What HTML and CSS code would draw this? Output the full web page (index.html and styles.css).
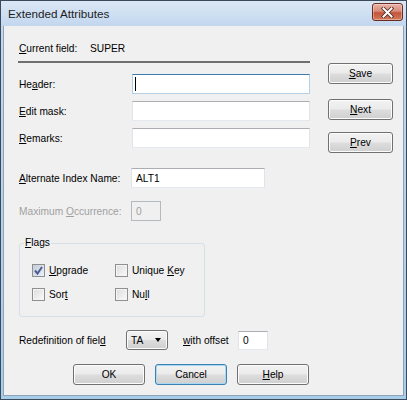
FILE: index.html
```html
<!DOCTYPE html>
<html lang="en">
<head>
    <meta charset="UTF-8">
    <title>Extended Attributes</title>
    <link rel="stylesheet" href="styles.css">
</head>
<body>

    <div class="window">
        <div class="titlebar">
            <span class="title">Extended Attributes</span>
            <span class="close">
                <svg width="13" height="11" viewBox="0 0 13 11">
                    <path d="M2.5 1.5 L10.5 9.5 M10.5 1.5 L2.5 9.5" stroke="#4a2a24" stroke-width="3.6" stroke-linecap="square"/>
                    <path d="M2.5 1.5 L10.5 9.5 M10.5 1.5 L2.5 9.5" stroke="#ffffff" stroke-width="2" stroke-linecap="square"/>
                </svg>
            </span>
        </div>

        <div class="client">
            <div class="top">
                <div class="fields">
                    <div class="current">
                        <span class="cur-label"><u>C</u>urrent field:</span>
                        <span>SUPER</span>
                    </div>
                    <div class="sep"></div>

                    <div class="row first">
                        <span class="lbl">He<u>a</u>der:</span>
                        <span class="field">
                            <input type="text" class="txt wide focus">
                            <span class="caret"></span>
                        </span>
                    </div>
                    <div class="row">
                        <span class="lbl"><u>E</u>dit mask:</span>
                        <input type="text" class="txt wide">
                    </div>
                    <div class="row">
                        <span class="lbl"><u>R</u>emarks:</span>
                        <input type="text" class="txt wide">
                    </div>
                </div>

                <div class="side">
                    <button class="btn save"><u>S</u>ave</button>
                    <button class="btn next"><u>N</u>ext</button>
                    <button class="btn prev"><u>P</u>rev</button>
                </div>
            </div>

            <div class="row alt">
                <span class="lbl"><u>A</u>lternate Index Name:</span>
                <input type="text" class="txt mid" value="ALT1">
            </div>
            <div class="row max">
                <span class="lbl disabled">Maximum <u>O</u>ccurrence:</span>
                <input type="text" class="txt small" value="0" disabled>
            </div>

            <fieldset class="flags">
                <legend><u>F</u>lags</legend>
                <div class="checks">
                    <label class="check">
                        <span class="box on">
                            <svg width="11" height="11" viewBox="0 0 11 11">
                                <path d="M2 5.5 L4.5 8.5 L9 2" fill="none" stroke="#4b5f96" stroke-width="2"/>
                            </svg>
                        </span>
                        <span><u>U</u>pgrade</span>
                    </label>
                    <label class="check">
                        <span class="box"></span>
                        <span>Unique <u>K</u>ey</span>
                    </label>
                    <label class="check">
                        <span class="box"></span>
                        <span>Sor<u>t</u></span>
                    </label>
                    <label class="check">
                        <span class="box"></span>
                        <span>Nu<u>l</u>l</span>
                    </label>
                </div>
            </fieldset>

            <div class="row redef">
                <span class="redef-lbl">Redefinition of fiel<u>d</u></span>
                <div class="combo">
                    <span>TA</span>
                    <span class="arrow"></span>
                </div>
                <span class="offset-lbl"><u>w</u>ith offset</span>
                <input type="text" class="txt tiny" value="0">
            </div>

            <div class="actions">
                <button class="btn wide-btn">OK</button>
                <button class="btn wide-btn default">Cancel</button>
                <button class="btn wide-btn"><u>H</u>elp</button>
            </div>
        </div>
    </div>

</body>
</html>
```

FILE: styles.css
```css
* {
    box-sizing: border-box;
}

body {
    margin: 0;
    font-family: "Liberation Sans", Arial, sans-serif;
    font-size: 10.2px;
    color: #000;
}

/* Window frame */
.window {
    width: 407px;
    height: 400px;
    border: 1px solid #3b4a5b;
    padding: 0 2px 3px 2px;
    background: linear-gradient(180deg, #dce8f5 0%, #c3d7ed 30px, #a8cde9 100%);
    display: flex;
    flex-direction: column;
}

.titlebar {
    height: 25px;
    margin: 0 -2px;
    padding: 0 3px 0 7px;
    display: flex;
    align-items: center;
    justify-content: space-between;
    background: linear-gradient(180deg, #dbe7f5 0%, #cfe0f2 50%, #c2d6ee 100%);
}

.title {
    font-size: 11.7px;
    color: #1e1e1e;
}

.close {
    width: 31px;
    height: 18px;
    margin-top: -3px;
    border: 1px solid #6b2b22;
    border-radius: 3px;
    background: linear-gradient(180deg, #e9b4a8 0%, #d98a78 45%, #c5533c 55%, #d27c5c 100%);
    box-shadow: inset 0 0 0 1px rgba(255, 255, 255, 0.35);
    display: flex;
    align-items: center;
    justify-content: center;
}

.client {
    flex: 1;
    background: #f0f0f0;
    border: 1px solid #8ea3b9;
    border-top: none;
    padding: 15px 0 0 15px;
}

/* Top part: fields and side buttons */
.top {
    display: flex;
    align-items: flex-start;
}

.fields {
    width: 291px;
}

.current {
    display: flex;
    height: 14px;
    align-items: center;
}

.cur-label {
    width: 71px;
}

.sep {
    margin: 6px 0 0 -1px;
    width: 292px;
    border-top: 2px solid #6f6f6f;
}

.row {
    display: flex;
    align-items: center;
    height: 20px;
    margin-top: 7px;
}

.row.first {
    margin-top: 11px;
}

.lbl {
    width: 113px;
}

.disabled {
    color: #a0a0a0;
}

.field {
    position: relative;
    display: flex;
}

.caret {
    position: absolute;
    left: 3px;
    top: 3px;
    width: 1px;
    height: 14px;
    background: #000;
}

/* Text boxes */
.txt {
    height: 20px;
    margin: 0;
    padding: 0 0 0 4px;
    font-family: inherit;
    font-size: inherit;
    color: #000;
    background: #fff;
    border: 1px solid #e2e3ea;
    border-top-color: #abadb3;
    border-bottom-color: #e3e9ef;
    border-radius: 0;
    outline: none;
}

.txt.focus {
    border-color: #b5cfe7;
    border-top-color: #3d7bad;
}

.txt:disabled {
    background: #f0f0f0;
    border-color: #b4b9bd;
    color: #a0a0a0;
}

.wide {
    width: 178px;
}

.mid {
    width: 134px;
}

.small {
    width: 30px;
}

.tiny {
    width: 30px;
    height: 19px;
}

.side {
    margin-left: 18px;
    width: 65px;
    padding-top: 22px;
    display: flex;
    flex-direction: column;
}

/* Buttons */
.btn {
    height: 21px;
    padding: 0;
    font-family: inherit;
    font-size: inherit;
    color: #000;
    border: 1px solid #707070;
    border-radius: 3px;
    background: linear-gradient(180deg, #f2f2f2 0%, #ebebeb 48%, #dddddd 52%, #cfcfcf 100%);
    box-shadow: inset 0 0 0 1px #fcfcfc;
}

.side .btn {
    width: 65px;
}

.next {
    margin-top: 15px;
}

.prev {
    margin-top: 12px;
}

.alt {
    margin-top: 15px;
}

.alt .lbl,
.max .lbl {
    width: 112px;
}

.max {
    margin-top: 13px;
}

/* Flags group */
.flags {
    width: 186px;
    margin: 15px 0 0 0;
    padding: 0 0 13px 4px;
    border: 1px solid #d5dfe5;
    border-radius: 3px;
    min-width: 0;
}

.flags legend {
    padding: 0 1px;
    line-height: 14px;
}

.checks {
    margin: 12px 0 0 8px;
    display: grid;
    grid-template-columns: 83px 83px;
    row-gap: 7px;
}

.check {
    display: flex;
    align-items: center;
    gap: 4px;
    height: 17px;
}

.box {
    width: 13px;
    height: 13px;
    border: 1px solid #8e8f8f;
    background: linear-gradient(135deg, #dcdcdc 0%, #f4f4f4 80%, #ffffff 100%);
    box-shadow: inset 0 0 0 1px #f4f4f4;
    display: flex;
    align-items: center;
    justify-content: center;
}

.box.on {
    background: linear-gradient(135deg, #c5cbd9 0%, #e4e8f1 80%, #f3f5f9 100%);
    box-shadow: none;
}

/* Redefinition row */
.redef {
    margin-top: 13px;
}

.redef-lbl {
    width: 107px;
}

.combo {
    width: 42px;
    height: 20px;
    padding: 0 0 0 4px;
    border: 1px solid #707070;
    border-radius: 3px;
    background: linear-gradient(180deg, #f2f2f2 0%, #ebebeb 48%, #dddddd 52%, #cfcfcf 100%);
    box-shadow: inset 0 0 0 1px #fcfcfc;
    display: flex;
    align-items: center;
    justify-content: space-between;
}

.arrow {
    margin-right: 6px;
    width: 0;
    height: 0;
    border-left: 3.5px solid transparent;
    border-right: 3.5px solid transparent;
    border-top: 4px solid #000;
}

.offset-lbl {
    margin-left: 15px;
    width: 55px;
}

/* Bottom buttons */
.actions {
    margin: 14px 0 0 54px;
    display: flex;
    gap: 10px;
}

.wide-btn {
    width: 72px;
}

.default {
    border-color: #3c7fb1;
    box-shadow: inset 0 0 0 1px #a9d8f3;
}
```
